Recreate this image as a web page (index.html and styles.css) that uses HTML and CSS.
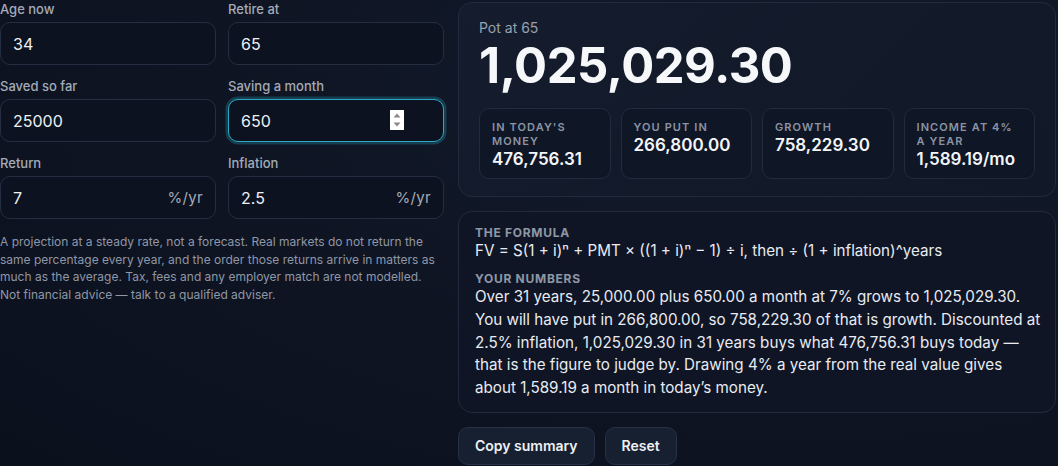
FILE: index.html
```html
<!DOCTYPE html>
<html lang="en">
<head>
<meta charset="utf-8">
<title>Pension pot calculator</title>
<link rel="stylesheet" href="styles.css">
</head>
<body>
<main class="layout">
  <section class="inputs">
    <div class="fields">
      <label class="field">
        <span class="field-label">Age now</span>
        <span class="box"><input class="box-input" type="text" value="34"></span>
      </label>
      <label class="field">
        <span class="field-label">Retire at</span>
        <span class="box"><input class="box-input" type="text" value="65"></span>
      </label>
      <label class="field">
        <span class="field-label">Saved so far</span>
        <span class="box"><input class="box-input" type="text" value="25000"></span>
      </label>
      <label class="field">
        <span class="field-label">Saving a month</span>
        <span class="box box-focus">
          <input class="box-input" type="text" value="650">
          <span class="spinner">
            <svg width="14" height="20" viewBox="0 0 14 20"><rect width="14" height="20" fill="#ffffff"/><path d="M3.5 7.5 L7 3.5 L10.5 7.5 Z" fill="#8a8a8a"/><path d="M3.5 12.5 L7 16.5 L10.5 12.5 Z" fill="#8a8a8a"/></svg>
          </span>
        </span>
      </label>
      <label class="field">
        <span class="field-label">Return</span>
        <span class="box"><input class="box-input" type="text" value="7"><span class="unit">%/yr</span></span>
      </label>
      <label class="field">
        <span class="field-label">Inflation</span>
        <span class="box"><input class="box-input" type="text" value="2.5"><span class="unit">%/yr</span></span>
      </label>
    </div>
    <p class="disclaimer">A projection at a steady rate, not a forecast. Real markets do not return the same percentage every year, and the order those returns arrive in matters as much as the average. Tax, fees and any employer match are not modelled. Not financial advice — talk to a qualified adviser.</p>
  </section>

  <section class="results">
    <div class="panel pot">
      <div class="pot-label">Pot at 65</div>
      <div class="pot-value">1,025,029.30</div>
      <div class="stats">
        <div class="stat"><div class="stat-label">In today's money</div><div class="stat-value">476,756.31</div></div>
        <div class="stat"><div class="stat-label">You put in</div><div class="stat-value">266,800.00</div></div>
        <div class="stat"><div class="stat-label">Growth</div><div class="stat-value">758,229.30</div></div>
        <div class="stat"><div class="stat-label">Income at 4% a year</div><div class="stat-value">1,589.19/mo</div></div>
      </div>
    </div>

    <div class="panel explain">
      <div class="explain-label">The formula</div>
      <div class="formula">FV = S(1 + i)ⁿ + PMT × ((1 + i)ⁿ − 1) ÷ i, then ÷ (1 + inflation)^years</div>
      <div class="explain-label">Your numbers</div>
      <p class="explain-text">Over 31 years, 25,000.00 plus 650.00 a month at 7% grows to 1,025,029.30. You will have put in 266,800.00, so 758,229.30 of that is growth. Discounted at 2.5% inflation, 1,025,029.30 in 31 years buys what 476,756.31 buys today — that is the figure to judge by. Drawing 4% a year from the real value gives about 1,589.19 a month in today’s money.</p>
    </div>

    <div class="actions">
      <button class="btn" type="button">Copy summary</button>
      <button class="btn" type="button">Reset</button>
    </div>
  </section>
</main>
</body>
</html>
```
FILE: styles.css
```css
* { box-sizing: border-box; }
html, body {
  margin: 0;
  height: 100%;
}
body {
  background: radial-gradient(ellipse at 75% 20%, #131b2b 0%, #0e1422 55%, #0b101d 100%);
  font-family: Inter, "Noto Sans", "Liberation Sans", sans-serif;
  color: #e8ebf1;
  overflow: hidden;
}
.layout {
  display: grid;
  grid-template-columns: 444px 598px;
  gap: 14px;
  align-items: start;
}
.fields {
  display: grid;
  grid-template-columns: 216px 216px;
  column-gap: 12px;
  row-gap: 12px;
}
.field {
  display: flex;
  flex-direction: column;
  gap: 3px;
}
.field-label {
  font-size: 13px;
  line-height: 19px;
  font-weight: 500;
  color: #a3abb9;
}
.box {
  position: relative;
  display: flex;
  align-items: center;
  height: 43px;
  border: 1px solid #252e40;
  border-radius: 10px;
  background: #0c1220;
  padding: 0 12px;
}
.box-focus {
  border: 1.5px solid #2aa9c2;
  box-shadow: 0 0 0 2.5px rgba(42, 169, 194, 0.28);
}
.box-input {
  flex: 1;
  min-width: 0;
  border: 0;
  outline: 0;
  background: transparent;
  color: #eef0f4;
  font-family: inherit;
  font-size: 16px;
  padding: 0;
}
.unit {
  font-size: 15px;
  color: #a3abb9;
  letter-spacing: 0.02em;
}
.spinner {
  position: absolute;
  left: 161px;
  top: 10px;
  width: 14px;
  height: 20px;
  display: block;
  line-height: 0;
}
.disclaimer {
  margin: 14px 0 0;
  font-size: 12px;
  line-height: 17.5px;
  color: #8f97a6;
}
.results {
  display: flex;
  flex-direction: column;
  align-items: flex-start;
  padding-top: 2px;
}
.panel {
  width: 100%;
  border: 1px solid #222b3c;
  border-radius: 14px;
  background: linear-gradient(135deg, #141c2d 0%, #111827 100%);
}
.pot {
  padding: 17px 20px 17px 20px;
}
.pot-label {
  font-size: 14px;
  line-height: 16px;
  color: #98a1b0;
}
.pot-value {
  font-size: 49px;
  line-height: 59px;
  font-weight: 700;
  letter-spacing: -0.01em;
  color: #f6f7f9;
  margin-bottom: 13px;
}
.stats {
  display: grid;
  grid-template-columns: repeat(4, 1fr);
  gap: 10px;
}
.stat {
  border: 1px solid #222b3c;
  border-radius: 10px;
  background: #0f1626;
  padding: 11px 12px 8px;
  min-height: 71px;
}
.stat-label {
  font-size: 11px;
  line-height: 14px;
  font-weight: 600;
  letter-spacing: 0.1em;
  text-transform: uppercase;
  color: #8b94a4;
}
.stat-value {
  margin-top: 1px;
  font-size: 17px;
  line-height: 21px;
  font-weight: 600;
  color: #f3f5f8;
}
.explain {
  margin-top: 14px;
  padding: 13px 10px 12px 16px;
  background: #0f1525;
}
.explain-label {
  font-size: 12px;
  line-height: 15px;
  font-weight: 700;
  letter-spacing: 0.06em;
  text-transform: uppercase;
  color: #8e97a6;
}
.formula {
  font-size: 15.2px;
  line-height: 22px;
  color: #e8ebf1;
  margin-bottom: 9px;
}
.explain-text {
  margin: 0;
  font-size: 15.2px;
  line-height: 22.8px;
  color: #e8ebf1;
}
.actions {
  display: flex;
  gap: 10px;
  margin-top: 14px;
}
.btn {
  height: 38px;
  padding: 0 16px;
  border: 1px solid #283146;
  border-radius: 10px;
  background: #172031;
  color: #eef0f4;
  font-family: inherit;
  font-size: 14px;
  font-weight: 600;
}
```
